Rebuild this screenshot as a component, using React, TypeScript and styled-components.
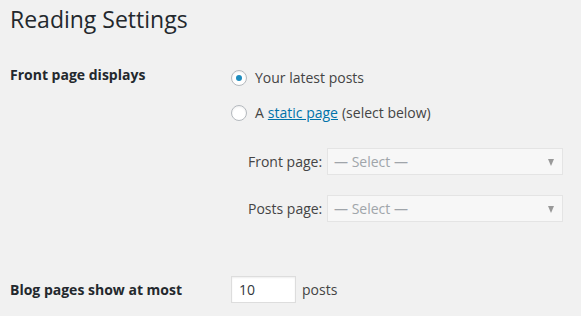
import React from "react";
import styled, { createGlobalStyle } from "styled-components";

const Global = createGlobalStyle`
  html, body { margin: 0; padding: 0; background: #f1f1f1; }
  body { font-family: "Open Sans", "Liberation Sans", sans-serif; color: #444; font-size: 14px; }
`;

const Page = styled.div`
  padding: 5px 10px 0 10px;
`;

const Title = styled.h1`
  margin: 0;
  font-size: 23px;
  font-weight: 400;
  line-height: 29px;
  color: #23282d;
`;

const Row = styled.div<{ $top: number }>`
  display: grid;
  grid-template-columns: 221px 1fr;
  margin-top: ${(p) => p.$top}px;
`;

const Label = styled.div<{ $pad: number }>`
  font-weight: 700;
  font-size: 14px;
  line-height: 20px;
  color: #23282d;
  padding-top: ${(p) => p.$pad}px;
`;

const Options = styled.div`
  display: flex;
  flex-direction: column;
`;

const RadioLine = styled.label<{ $top: number }>`
  display: flex;
  align-items: center;
  height: 20px;
  margin-top: ${(p) => p.$top}px;
  line-height: 20px;
  color: #444;
`;

const Radio = styled.span<{ $checked?: boolean }>`
  box-sizing: border-box;
  width: 16px;
  height: 16px;
  border-radius: 50%;
  border: 1px solid #b4b9be;
  background: #fff;
  box-shadow: inset 0 1px 2px rgba(0, 0, 0, 0.07);
  margin-right: 8px;
  display: flex;
  align-items: center;
  justify-content: center;
  &::after {
    content: "";
    display: ${(p) => (p.$checked ? "block" : "none")};
    width: 6px;
    height: 6px;
    border-radius: 50%;
    background: #1e8cbe;
  }
`;

const Link = styled.a`
  color: #0073aa;
  text-decoration: underline;
  margin: 0 4px;
`;

const SelectList = styled.div`
  display: flex;
  flex-direction: column;
  gap: 20px;
  margin-top: 25px;
  padding-left: 17px;
`;

const SelectRow = styled.div`
  display: flex;
  align-items: center;
`;

const SelectLabel = styled.span`
  width: 79px;
  color: #444;
`;

const Select = styled.div`
  box-sizing: border-box;
  width: 236px;
  height: 27px;
  border: 1px solid #e4e4e4;
  background: #f7f7f7;
  display: flex;
  align-items: center;
  justify-content: space-between;
  padding: 0 8px 0 6px;
  color: #a0a5aa;
  font-size: 14px;
`;

const Arrow = styled.span`
  width: 0;
  height: 0;
  border-left: 3.5px solid transparent;
  border-right: 3.5px solid transparent;
  border-top: 7px solid #999;
  margin-top: 1px;
`;

const Inline = styled.div`
  display: flex;
  align-items: center;
`;

const NumberInput = styled.div`
  box-sizing: border-box;
  width: 65px;
  height: 27px;
  background: #fff;
  border: 1px solid #ddd;
  box-shadow: inset 0 1px 2px rgba(0, 0, 0, 0.07);
  padding-left: 7px;
  display: flex;
  align-items: center;
  color: #32373c;
  margin-right: 6px;
`;

export default function App() {
  return (
    <>
      <Global />
      <Page>
        <Title>Reading Settings</Title>
        <Row $top={31}>
          <Label $pad={0}>Front page displays</Label>
          <Options>
            <RadioLine $top={3}>
              <Radio $checked />
              Your latest posts
            </RadioLine>
            <RadioLine $top={15}>
              <Radio />
              A<Link href="#">static page</Link>(select below)
            </RadioLine>
            <SelectList>
              <SelectRow>
                <SelectLabel>Front page:</SelectLabel>
                <Select>
                  — Select —<Arrow />
                </Select>
              </SelectRow>
              <SelectRow>
                <SelectLabel>Posts page:</SelectLabel>
                <Select>
                  — Select —<Arrow />
                </Select>
              </SelectRow>
            </SelectList>
          </Options>
        </Row>
        <Row $top={54}>
          <Label $pad={4}>Blog pages show at most</Label>
          <Inline>
            <NumberInput>10</NumberInput>
            posts
          </Inline>
        </Row>
      </Page>
    </>
  );
}
